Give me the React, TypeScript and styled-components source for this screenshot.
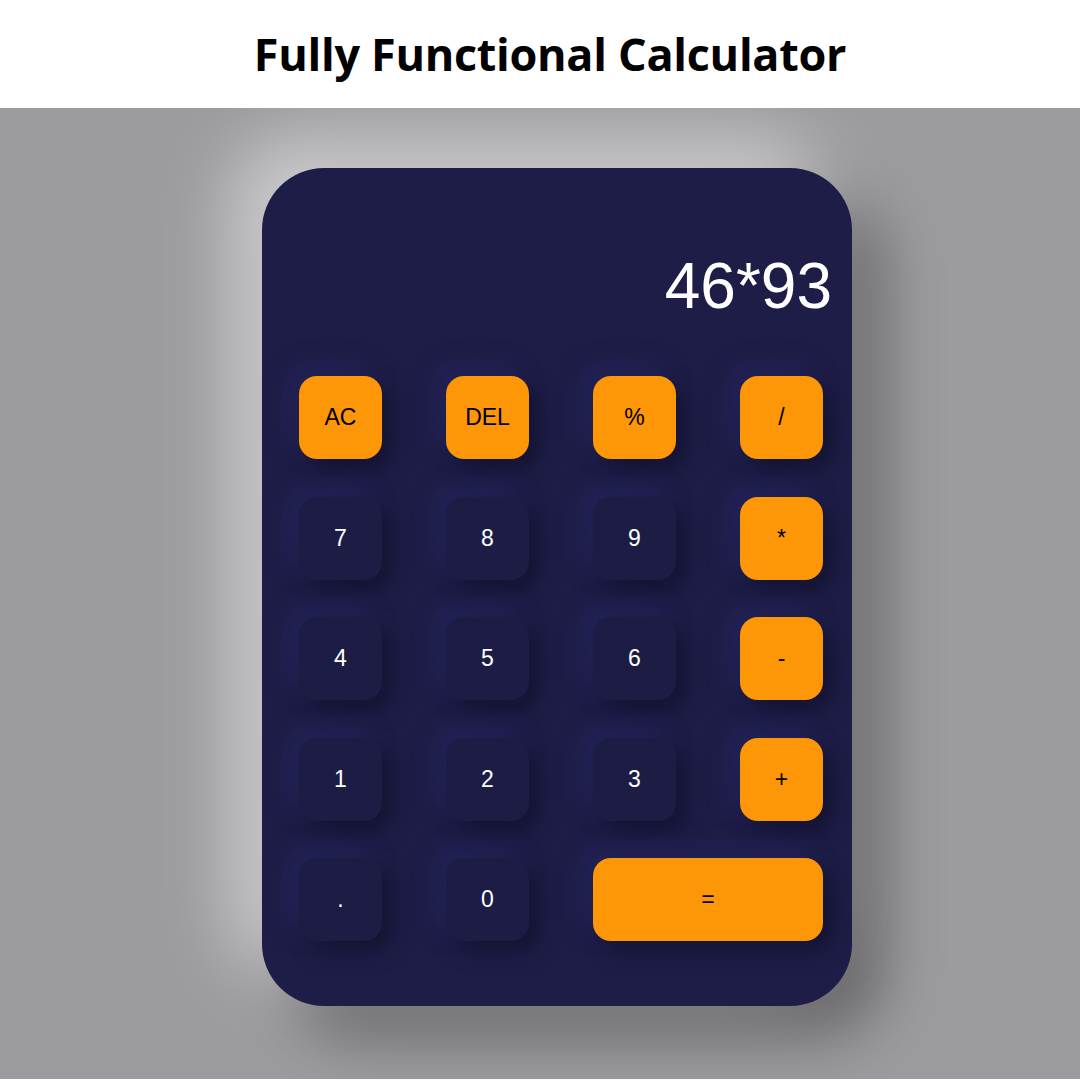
import styled, { createGlobalStyle } from 'styled-components';

const GlobalStyle = createGlobalStyle`
  html, body {
    margin: 0;
    padding: 0;
    background: #ffffff;
  }
  * {
    box-sizing: border-box;
  }
`;

const Page = styled.div`
  width: 1080px;
  height: 1080px;
  display: flex;
  flex-direction: column;
  background: #ffffff;
  overflow: hidden;
`;

const Header = styled.header`
  height: 108px;
  display: flex;
  align-items: center;
  justify-content: center;
  padding: 0 0 2px 20px;
`;

const Title = styled.h1`
  margin: 0;
  font-family: 'Open Sans', 'Liberation Sans', sans-serif;
  font-weight: 700;
  font-size: 45px;
  color: #000;
  letter-spacing: -0.3px;
`;

const Stage = styled.main`
  height: 971px;
  display: flex;
  justify-content: center;
  align-items: flex-start;
  padding: 60px 0 0 34px;
  background: #9c9b9f;
`;

const Calculator = styled.div`
  width: 590px;
  height: 838px;
  border-radius: 62px;
  background: #1e1d47;
  padding: 0 30px 0 37px;
  box-shadow: -30px -30px 70px rgba(255, 255, 255, 0.5),
    30px 30px 60px rgba(0, 0, 0, 0.35);
`;

const Display = styled.div`
  height: 208px;
  padding: 86px 20px 0 0;
  margin-right: -30px;
  text-align: right;
  font-family: 'Liberation Sans', Arial, sans-serif;
  font-size: 64px;
  line-height: 64px;
  color: #ffffff;
`;

const Keypad = styled.div`
  display: grid;
  grid-template-columns: repeat(4, 83px);
  grid-auto-rows: 83px;
  column-gap: 64px;
  row-gap: 37.5px;
`;

const Key = styled.button<{ $accent?: boolean; $wide?: boolean }>`
  grid-column: ${(p) => (p.$wide ? 'span 2' : 'auto')};
  border: none;
  border-radius: 18px;
  display: flex;
  align-items: center;
  justify-content: center;
  padding: 0;
  font-family: 'Liberation Sans', Arial, sans-serif;
  font-size: 23px;
  background: ${(p) => (p.$accent ? '#fd9708' : '#1d1c45')};
  color: ${(p) => (p.$accent ? '#000000' : '#ffffff')};
  box-shadow: 10px 10px 20px rgba(18, 17, 46, 0.75),
    -10px -10px 22px rgba(40, 40, 104, 0.55);
  cursor: pointer;
`;

const keys: { label: string; accent?: boolean; wide?: boolean }[] = [
  { label: 'AC', accent: true },
  { label: 'DEL', accent: true },
  { label: '%', accent: true },
  { label: '/', accent: true },
  { label: '7' },
  { label: '8' },
  { label: '9' },
  { label: '*', accent: true },
  { label: '4' },
  { label: '5' },
  { label: '6' },
  { label: '-', accent: true },
  { label: '1' },
  { label: '2' },
  { label: '3' },
  { label: '+', accent: true },
  { label: '.' },
  { label: '0' },
  { label: '=', accent: true, wide: true },
];

const App = () => {
  return (
    <Page>
      <GlobalStyle />
      <Header>
        <Title>Fully Functional Calculator</Title>
      </Header>
      <Stage>
        <Calculator>
          <Display>46*93</Display>
          <Keypad>
            {keys.map((k) => (
              <Key key={k.label} $accent={k.accent} $wide={k.wide}>
                {k.label}
              </Key>
            ))}
          </Keypad>
        </Calculator>
      </Stage>
    </Page>
  );
};

export default App;
